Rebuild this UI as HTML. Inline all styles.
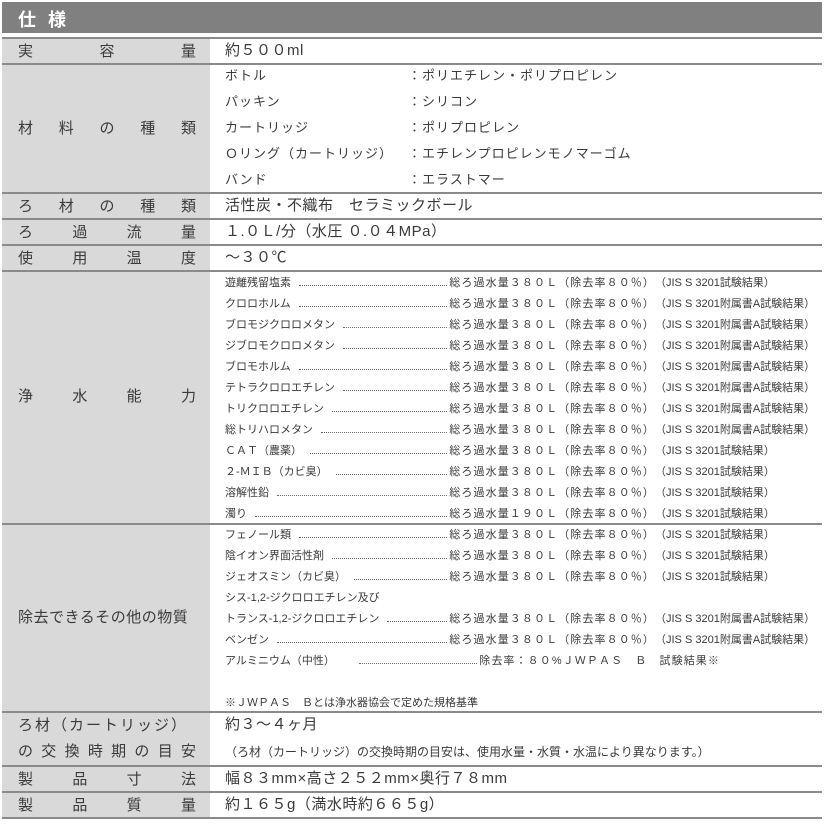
<!DOCTYPE html>
<html><head><meta charset="utf-8"><style>
*{margin:0;padding:0;box-sizing:border-box}
body{width:829px;height:825px;background:#fff;position:relative;overflow:hidden;font-family:"Liberation Sans","Noto Sans CJK JP",sans-serif;color:#3a3a3a}
.hd{position:absolute;left:2px;top:2px;width:820px;height:31px;background:#808080;color:#fff;font-weight:bold;font-size:18px;padding:4px 0 0 16px;letter-spacing:12px}
.lc{position:absolute;left:2px;width:208px;background:#d9d9d9}
.hl{position:absolute;left:2px;width:820px;height:2px;background:#8a8a8a}
.lb{position:absolute;left:18px;width:178px;display:flex;justify-content:space-between;font-size:15px;line-height:20px}
.t{position:absolute;white-space:nowrap;line-height:18px}
.m{font-size:14px;left:225px}
.s{font-size:11px;left:225px;display:flex;align-items:baseline}
.s .n{white-space:nowrap}
.s .d{flex:1;border-bottom:1px dotted #666;margin:0 2px 3px 8px}
.s .r{white-space:nowrap;letter-spacing:1.1px}
.j{position:absolute;left:655px;font-size:11px;white-space:nowrap;line-height:18px}
.w{letter-spacing:1px}
.v{letter-spacing:0.5px}
</style></head><body>
<div class="hd">仕様</div>
<div class="lc" style="top:38px;height:780px"></div>
<div class="hl" style="top:37px"></div>
<div class="hl" style="top:63px"></div>
<div class="hl" style="top:192px"></div>
<div class="hl" style="top:218px"></div>
<div class="hl" style="top:244px"></div>
<div class="hl" style="top:270px"></div>
<div class="hl" style="top:523px"></div>
<div class="hl" style="top:711px"></div>
<div class="hl" style="top:765px"></div>
<div class="hl" style="top:791px"></div>
<div class="hl" style="top:817px"></div>

<div class="lb" style="top:42px"><span>実</span><span>容</span><span>量</span></div>
<div class="lb" style="top:119px"><span>材</span><span>料</span><span>の</span><span>種</span><span>類</span></div>
<div class="lb" style="top:197px"><span>ろ</span><span>材</span><span>の</span><span>種</span><span>類</span></div>
<div class="lb" style="top:223px"><span>ろ</span><span>過</span><span>流</span><span>量</span></div>
<div class="lb" style="top:249px"><span>使</span><span>用</span><span>温</span><span>度</span></div>
<div class="lb" style="top:387px"><span>浄</span><span>水</span><span>能</span><span>力</span></div>
<div class="lb" style="top:608px;justify-content:flex-start;letter-spacing:0.5px"><span>除去できるその他の物質</span></div>
<div class="lb" style="top:716px;letter-spacing:2px;justify-content:flex-start"><span>ろ材（カートリッジ）</span></div>
<div class="lb" style="top:742px"><span>の</span><span>交</span><span>換</span><span>時</span><span>期</span><span>の</span><span>目</span><span>安</span></div>
<div class="lb" style="top:770px"><span>製</span><span>品</span><span>寸</span><span>法</span></div>
<div class="lb" style="top:796px"><span>製</span><span>品</span><span>質</span><span>量</span></div>

<div class="t m v" style="top:42px;font-size:15px">約５００ml</div>
<div class="t m w" style="top:67px;font-size:13px">ボトル</div><div class="t w" style="left:408px;top:67px;font-size:13px">：ポリエチレン・ポリプロピレン</div>
<div class="t m w" style="top:93px;font-size:13px">パッキン</div><div class="t w" style="left:408px;top:93px;font-size:13px">：シリコン</div>
<div class="t m w" style="top:119px;font-size:13px">カートリッジ</div><div class="t w" style="left:408px;top:119px;font-size:13px">：ポリプロピレン</div>
<div class="t m w" style="top:145px;font-size:13px">Ｏリング（カートリッジ）</div><div class="t w" style="left:408px;top:145px;font-size:13px">：エチレンプロピレンモノマーゴム</div>
<div class="t m w" style="top:171px;font-size:13px">バンド</div><div class="t w" style="left:408px;top:171px;font-size:13px">：エラストマー</div>
<div class="t m v" style="top:197px;font-size:15px">活性炭・不織布　セラミックボール</div>
<div class="t m v" style="top:223px;font-size:15px">１.０Ｌ/分（水圧 ０.０４MPa）</div>
<div class="t m v" style="top:249px;font-size:15px">～３０℃</div>

<div class="t s" style="top:274px;width:430px"><span class="n">遊離残留塩素</span><span class="d"></span><span class="r">総ろ過水量３８０Ｌ（除去率８０％）</span></div><div class="j" style="top:274px">（JIS S 3201試験結果）</div>
<div class="t s" style="top:295px;width:430px"><span class="n">クロロホルム</span><span class="d"></span><span class="r">総ろ過水量３８０Ｌ（除去率８０％）</span></div><div class="j" style="top:295px">（JIS S 3201附属書A試験結果）</div>
<div class="t s" style="top:316px;width:430px"><span class="n">ブロモジクロロメタン</span><span class="d"></span><span class="r">総ろ過水量３８０Ｌ（除去率８０％）</span></div><div class="j" style="top:316px">（JIS S 3201附属書A試験結果）</div>
<div class="t s" style="top:337px;width:430px"><span class="n">ジブロモクロロメタン</span><span class="d"></span><span class="r">総ろ過水量３８０Ｌ（除去率８０％）</span></div><div class="j" style="top:337px">（JIS S 3201附属書A試験結果）</div>
<div class="t s" style="top:358px;width:430px"><span class="n">ブロモホルム</span><span class="d"></span><span class="r">総ろ過水量３８０Ｌ（除去率８０％）</span></div><div class="j" style="top:358px">（JIS S 3201附属書A試験結果）</div>
<div class="t s" style="top:379px;width:430px"><span class="n">テトラクロロエチレン</span><span class="d"></span><span class="r">総ろ過水量３８０Ｌ（除去率８０％）</span></div><div class="j" style="top:379px">（JIS S 3201附属書A試験結果）</div>
<div class="t s" style="top:400px;width:430px"><span class="n">トリクロロエチレン</span><span class="d"></span><span class="r">総ろ過水量３８０Ｌ（除去率８０％）</span></div><div class="j" style="top:400px">（JIS S 3201附属書A試験結果）</div>
<div class="t s" style="top:421px;width:430px"><span class="n">総トリハロメタン</span><span class="d"></span><span class="r">総ろ過水量３８０Ｌ（除去率８０％）</span></div><div class="j" style="top:421px">（JIS S 3201附属書A試験結果）</div>
<div class="t s" style="top:442px;width:430px"><span class="n">ＣＡＴ（農薬）</span><span class="d"></span><span class="r">総ろ過水量３８０Ｌ（除去率８０％）</span></div><div class="j" style="top:442px">（JIS S 3201試験結果）</div>
<div class="t s" style="top:463px;width:430px"><span class="n">２-ＭＩＢ（カビ臭）</span><span class="d"></span><span class="r">総ろ過水量３８０Ｌ（除去率８０％）</span></div><div class="j" style="top:463px">（JIS S 3201試験結果）</div>
<div class="t s" style="top:484px;width:430px"><span class="n">溶解性鉛</span><span class="d"></span><span class="r">総ろ過水量３８０Ｌ（除去率８０％）</span></div><div class="j" style="top:484px">（JIS S 3201試験結果）</div>
<div class="t s" style="top:505px;width:430px"><span class="n">濁り</span><span class="d"></span><span class="r">総ろ過水量１９０Ｌ（除去率８０％）</span></div><div class="j" style="top:505px">（JIS S 3201試験結果）</div>

<div class="t s" style="top:526px;width:430px"><span class="n">フェノール類</span><span class="d"></span><span class="r">総ろ過水量３８０Ｌ（除去率８０％）</span></div><div class="j" style="top:526px">（JIS S 3201試験結果）</div>
<div class="t s" style="top:547px;width:430px"><span class="n">陰イオン界面活性剤</span><span class="d"></span><span class="r">総ろ過水量３８０Ｌ（除去率８０％）</span></div><div class="j" style="top:547px">（JIS S 3201試験結果）</div>
<div class="t s" style="top:568px;width:430px"><span class="n">ジェオスミン（カビ臭）</span><span class="d"></span><span class="r">総ろ過水量３８０Ｌ（除去率８０％）</span></div><div class="j" style="top:568px">（JIS S 3201試験結果）</div>
<div class="t s" style="top:589px"><span class="n">シス-1,2-ジクロロエチレン及び</span></div>
<div class="t s" style="top:610px;width:430px"><span class="n">トランス-1,2-ジクロロエチレン</span><span class="d"></span><span class="r">総ろ過水量３８０Ｌ（除去率８０％）</span></div><div class="j" style="top:610px">（JIS S 3201附属書A試験結果）</div>
<div class="t s" style="top:631px;width:430px"><span class="n">ベンゼン</span><span class="d"></span><span class="r">総ろ過水量３８０Ｌ（除去率８０％）</span></div><div class="j" style="top:631px">（JIS S 3201附属書A試験結果）</div>
<div class="t s" style="top:652px;width:495px"><span class="n">アルミニウム（中性）</span><span class="d" style="margin-left:24px"></span><span class="r">除去率：８０%ＪＷＰＡＳ　Ｂ　試験結果※</span></div>
<div class="t s" style="top:694px"><span class="n">※ＪＷＰＡＳ　Ｂとは浄水器協会で定めた規格基準</span></div>

<div class="t m v" style="top:716px;font-size:15px">約３～４ヶ月</div>
<div class="t m" style="top:743px;font-size:12px">（ろ材（カートリッジ）の交換時期の目安は、使用水量・水質・水温により異なります。）</div>
<div class="t m v" style="top:770px;font-size:15px">幅８３mm×高さ２５２mm×奥行７８mm</div>
<div class="t m v" style="top:796px;font-size:15px">約１６５g（満水時約６６５g）</div>
</body></html>
